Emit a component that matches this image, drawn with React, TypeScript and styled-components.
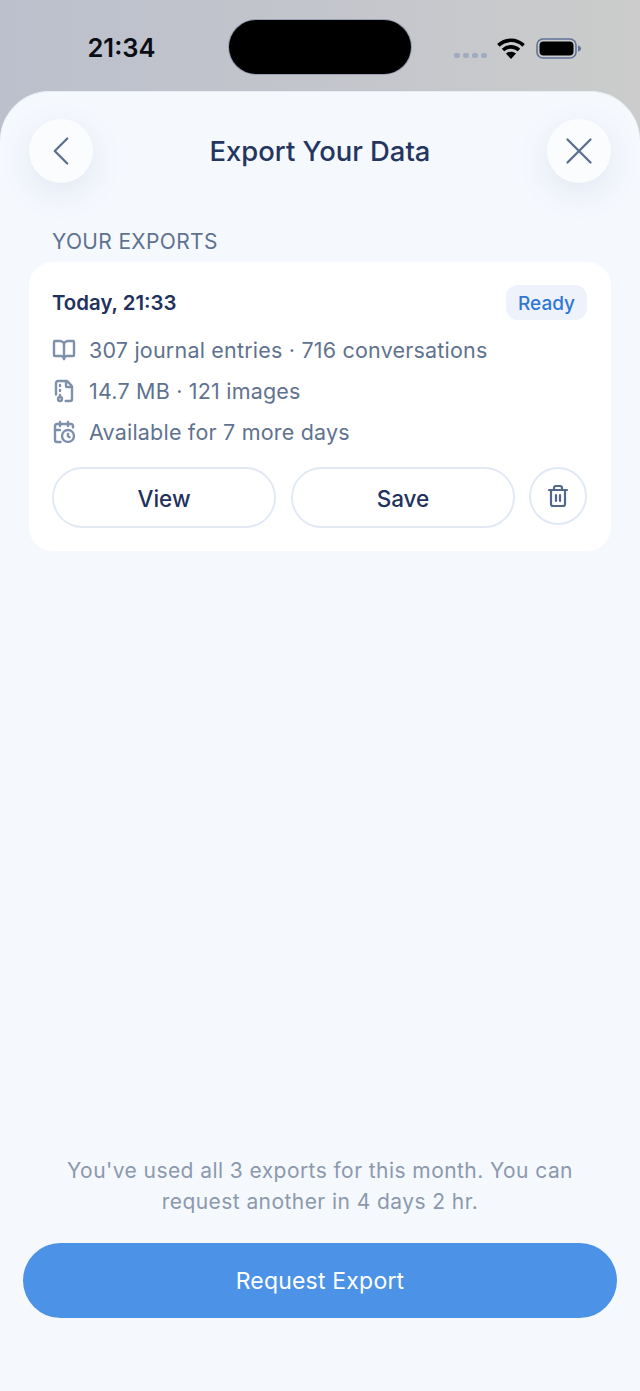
import React from 'react'
import styled, { createGlobalStyle } from 'styled-components'
import { BookOpen, CalendarClock, ChevronLeft, FileArchive, Trash2, X } from 'lucide-react'

const GlobalStyle = createGlobalStyle`
  html, body {
    margin: 0;
    padding: 0;
    background: #f5f8fd;
  }
  * {
    box-sizing: border-box;
  }
`

const Page = styled.div`
  width: 640px;
  height: 1391px;
  display: flex;
  flex-direction: column;
  overflow: hidden;
  font-family: Inter, "Liberation Sans", sans-serif;
  background: linear-gradient(90deg, #bcc0cc 0%, #c4c6cc 55%, #cbcccb 100%);
`

const StatusBar = styled.div`
  height: 91px;
  flex: none;
  padding-top: 20px;
  display: grid;
  grid-template-columns: 1fr 182px 1fr;
  align-items: start;
`

const Clock = styled.div`
  height: 54px;
  display: flex;
  align-items: center;
  justify-content: center;
  padding-left: 14px;
  font-size: 25.5px;
  font-weight: 600;
  color: #0b0d14;
`

const Island = styled.div`
  height: 54px;
  border-radius: 27px;
  background: #000;
  box-shadow: 0 0 0 1px rgba(70, 90, 130, 0.35);
`

const StatusIcons = styled.div`
  height: 54px;
  display: flex;
  align-items: center;
  gap: 11px;
  padding: 3px 0 0 43px;
`

const SignalDots = styled.div`
  display: flex;
  gap: 3px;
  margin: 14px -1px 0 0;
`

const SignalDot = styled.span`
  width: 6px;
  height: 5px;
  border-radius: 2px;
  background: #a0aac0;
`

const Sheet = styled.div`
  flex: 1;
  display: flex;
  flex-direction: column;
  padding-top: 28px;
  background: #f5f8fd;
  border-radius: 50px 50px 0 0;
  box-shadow: inset 0 1px 0 #e8ecf3;
`

const Header = styled.div`
  display: flex;
  align-items: center;
  justify-content: space-between;
  padding: 0 29px;
`

const RoundButton = styled.button`
  width: 64px;
  height: 64px;
  padding: 0;
  display: flex;
  align-items: center;
  justify-content: center;
  border: none;
  border-radius: 50%;
  background: #fbfcfe;
  color: #5b6f8f;
  box-shadow: 0 10px 30px rgba(120, 140, 185, 0.14);
`

const Title = styled.h1`
  margin: 0;
  font-size: 27.4px;
  font-weight: 500;
  color: #24365f;
`

const SectionLabel = styled.div`
  margin: 45px 0 0 52px;
  font-size: 21px;
  line-height: 28px;
  letter-spacing: 0.35px;
  color: #5f7290;
`

const Card = styled.div`
  margin: 6px 29px 0;
  padding: 23px;
  height: 289px;
  border-radius: 24px;
  background: #fff;
`

const CardTop = styled.div`
  display: flex;
  align-items: center;
  justify-content: space-between;
  height: 35px;
`

const CardDate = styled.div`
  font-size: 20.4px;
  font-weight: 600;
  color: #1f315c;
`

const Badge = styled.div`
  height: 35px;
  width: 81px;
  margin-right: 1px;
  padding-top: 1px;
  display: flex;
  align-items: center;
  justify-content: center;
  border-radius: 12px;
  background: #eef2fa;
  font-size: 19px;
  font-weight: 500;
  color: #2f76d6;
`

const MetaList = styled.div`
  display: flex;
  flex-direction: column;
  gap: 11px;
  margin-top: 15px;
`

const MetaRow = styled.div`
  display: flex;
  align-items: center;
  gap: 13px;
  height: 30px;
  font-size: 21.5px;
  letter-spacing: 0.2px;
  color: #5f7290;
  svg {
    flex: none;
    color: #7f90aa;
  }
`

const Actions = styled.div`
  display: flex;
  align-items: flex-start;
  gap: 15px;
  margin-top: 20px;
`

const OutlineButton = styled.button`
  width: 224px;
  height: 61px;
  padding-top: 3px;
  border: 2px solid #e2e9f5;
  border-radius: 31px;
  background: #fff;
  font-family: inherit;
  font-size: 22.5px;
  font-weight: 500;
  color: #1f315c;
`

const DeleteButton = styled.button`
  width: 58px;
  height: 58px;
  margin-left: -1px;
  padding: 0;
  display: flex;
  align-items: center;
  justify-content: center;
  border: 2px solid #e2e9f5;
  border-radius: 50%;
  background: #fff;
  color: #52688a;
`

const Footer = styled.div`
  margin-top: auto;
  padding: 0 23px 73px;
`

const Notice = styled.p`
  margin: 0 0 26px;
  padding: 0 40px;
  text-align: center;
  font-size: 21px;
  line-height: 31px;
  letter-spacing: 0.43px;
  color: #8c99ad;
`

const PrimaryButton = styled.button`
  display: block;
  width: 100%;
  height: 75px;
  padding-top: 2px;
  border: none;
  border-radius: 38px;
  background: #4c92e6;
  font-family: inherit;
  font-size: 23px;
  font-weight: 400;
  letter-spacing: 0.2px;
  color: #fff;
`

const WifiIcon = () => (
  <svg width="28" height="21" viewBox="0 0 28 21" fill="none" stroke="#000" strokeWidth="3.6">
    <path d="M1.4 7.4C8.6 0.6 19.4 0.6 26.6 7.4" />
    <path d="M6 12C10.6 7.8 17.4 7.8 22 12" />
    <path d="M14 21L9 15.6C12 13.2 16 13.2 19 15.6Z" fill="#000" stroke="none" />
  </svg>
)

const BatteryIcon = () => (
  <svg width="45" height="21" viewBox="0 0 45 21" fill="none">
    <rect x="1" y="1" width="39" height="19" rx="6" stroke="#5f7396" strokeWidth="1.6" />
    <rect x="3.5" y="3.5" width="34" height="14" rx="4" fill="#000" />
    <path d="M42 7.5C44 8 45 9 45 10.5C45 12 44 13 42 13.5Z" fill="#5f7396" />
  </svg>
)

const App: React.FC = () => (
  <Page>
    <GlobalStyle />
    <StatusBar>
      <Clock>21:34</Clock>
      <Island />
      <StatusIcons>
        <SignalDots>
          <SignalDot />
          <SignalDot />
          <SignalDot />
          <SignalDot />
        </SignalDots>
        <WifiIcon />
        <BatteryIcon />
      </StatusIcons>
    </StatusBar>
    <Sheet>
      <Header>
        <RoundButton aria-label="Back">
          <ChevronLeft size={50} strokeWidth={1.1} />
        </RoundButton>
        <Title>Export Your Data</Title>
        <RoundButton aria-label="Close">
          <X size={46} strokeWidth={1.2} />
        </RoundButton>
      </Header>
      <SectionLabel>YOUR EXPORTS</SectionLabel>
      <Card>
        <CardTop>
          <CardDate>Today, 21:33</CardDate>
          <Badge>Ready</Badge>
        </CardTop>
        <MetaList>
          <MetaRow>
            <BookOpen size={24} strokeWidth={2.4} />
            307 journal entries · 716 conversations
          </MetaRow>
          <MetaRow>
            <FileArchive size={24} strokeWidth={2.4} />
            14.7 MB · 121 images
          </MetaRow>
          <MetaRow>
            <CalendarClock size={24} strokeWidth={2.4} />
            Available for 7 more days
          </MetaRow>
        </MetaList>
        <Actions>
          <OutlineButton>View</OutlineButton>
          <OutlineButton>Save</OutlineButton>
          <DeleteButton aria-label="Delete">
            <Trash2 size={24} strokeWidth={2.2} />
          </DeleteButton>
        </Actions>
      </Card>
      <Footer>
        <Notice>You've used all 3 exports for this month. You can request another in 4 days 2 hr.</Notice>
        <PrimaryButton>Request Export</PrimaryButton>
      </Footer>
    </Sheet>
  </Page>
)

export default App
